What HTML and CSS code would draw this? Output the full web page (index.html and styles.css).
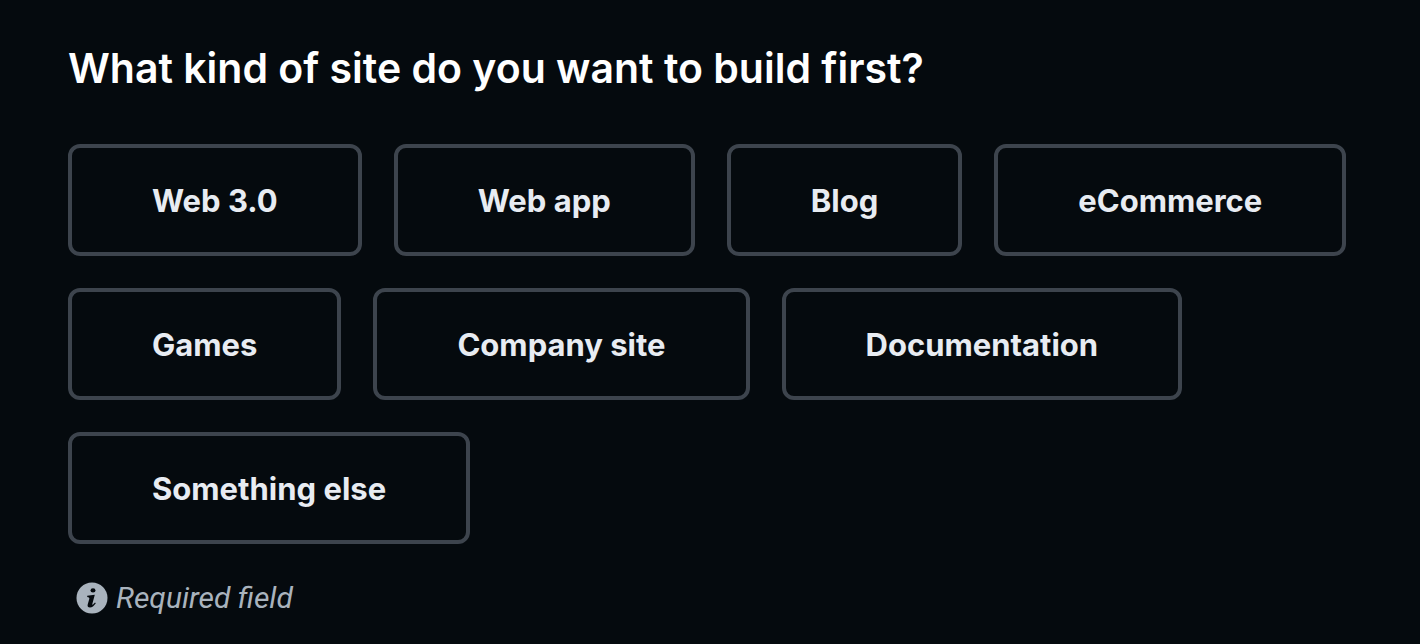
FILE: index.html
```html
<!DOCTYPE html>
<html lang="en">
<head>
<meta charset="utf-8">
<meta name="viewport" content="width=device-width, initial-scale=1">
<title>What kind of site do you want to build first?</title>
<link rel="stylesheet" href="styles.css">
</head>
<body>
<main class="survey">
  <h1 class="survey-title" id="question">What kind of site do you want to build first?</h1>
  <div class="options" role="group" aria-labelledby="question">
    <button class="option" type="button">Web 3.0</button>
    <button class="option" type="button">Web app</button>
    <button class="option" type="button">Blog</button>
    <button class="option" type="button">eCommerce</button>
    <button class="option" type="button">Games</button>
    <button class="option" type="button">Company site</button>
    <button class="option" type="button">Documentation</button>
    <button class="option" type="button">Something else</button>
  </div>
  <p class="hint">
    <svg class="hint-icon" viewBox="0 0 32 32" aria-hidden="true">
      <circle cx="16" cy="16" r="15.5" fill="#a9b3bd"/>
      <ellipse cx="17" cy="8.4" rx="2.5" ry="2.1" fill="#050a0e"/>
      <path d="M11.2 13.7 18.8 12.7 16.3 22Q16.1 23.2 17 22.6L19 20.4 19.8 21.2Q17 25.4 14 25.4 11 25.4 11.7 22.4L13.4 16.4Q13.7 15.2 11.2 15.1Z" fill="#050a0e"/>
    </svg>
    <span>Required field</span>
  </p>
</main>
</body>
</html>
```
FILE: styles.css
```css
* {
  box-sizing: border-box;
}

body {
  margin: 0;
  background: #050a0e;
  color: #e8ecf2;
  font-family: Inter, "Liberation Sans", sans-serif;
}

.survey {
  padding: 40px 68px 24px;
}

.survey-title {
  margin: 0 0 48px;
  color: #fff;
  font-size: 41px;
  line-height: 56px;
  font-weight: 600;
}

.options {
  display: flex;
  flex-wrap: wrap;
  gap: 32px;
}

.option {
  height: 112px;
  padding: 0 80px;
  border: 4px solid #3d444d;
  border-radius: 12px;
  background: transparent;
  color: inherit;
  font: inherit;
  font-size: 31px;
  font-weight: 650;
}

.hint {
  display: flex;
  align-items: center;
  gap: 8px;
  margin: 36px 0 0;
  padding-left: 8px;
  color: #a9b3bd;
  font-family: Roboto, "Liberation Sans", sans-serif;
  font-size: 30px;
  line-height: 36px;
  font-style: italic;
}

.hint-icon {
  width: 32px;
  height: 32px;
}
```
